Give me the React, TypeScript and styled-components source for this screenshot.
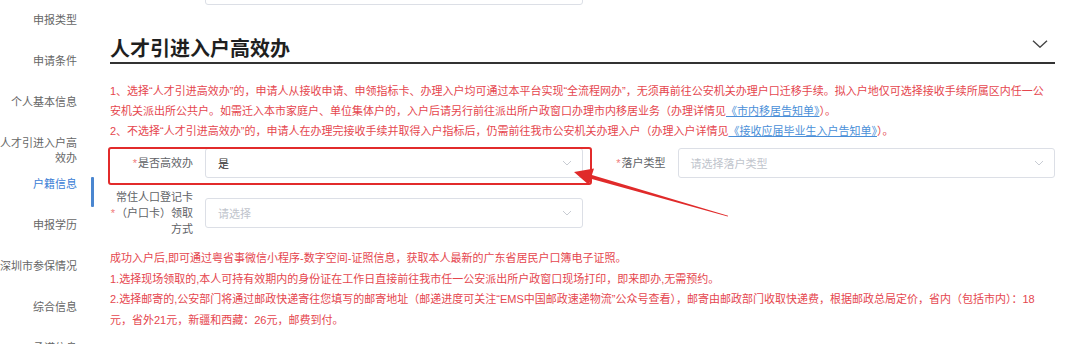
import React from "react";
import styled, { createGlobalStyle, css } from "styled-components";

const GlobalStyle = createGlobalStyle`
  html, body { margin: 0; padding: 0; background: #fff; }
  body {
    font-family: "Liberation Sans", "Noto Sans CJK SC", sans-serif;
    width: 1080px;
    height: 344px;
    overflow: hidden;
  }
`;

const Page = styled.div`
  position: relative;
  display: flex;
  width: 1080px;
  height: 344px;
  overflow: hidden;
  background: #fff;
`;

const Sidebar = styled.nav`
  flex: 0 0 95px;
  display: flex;
  flex-direction: column;
`;

const NavItem = styled.div<{ $active?: boolean }>`
  position: relative;
  flex: 0 0 41px;
  height: 41px;
  box-sizing: border-box;
  padding: 13px 18px 0 0;
  font-size: 11px;
  line-height: 15px;
  text-align: right;
  color: ${(p) => (p.$active ? "#3b80d6" : "#666")};
  ${(p) =>
    p.$active &&
    css`
      &::after {
        content: "";
        position: absolute;
        right: 1px;
        top: 13px;
        width: 3px;
        height: 30px;
        border-radius: 1px;
        background: #4a86d0;
      }
    `}
`;

const Main = styled.main`
  flex: 1;
  margin-left: 15px;
  padding-right: 25px;
  display: flex;
  flex-direction: column;
  min-width: 0;
`;

const FormGrid = styled.div<{ $top: number; $gap?: number }>`
  display: grid;
  grid-template-columns: 1fr 1fr;
  row-gap: ${(p) => p.$gap ?? 11}px;
  margin-top: ${(p) => p.$top}px;
`;

const FormItem = styled.div`
  position: relative;
  display: flex;
  align-items: center;
`;

const Label = styled.div`
  flex: 0 0 95px;
  box-sizing: border-box;
  padding-right: 12px;
  display: flex;
  justify-content: flex-end;
  align-items: center;
  font-size: 11px;
  line-height: 16px;
  color: #606266;
`;

const Star = styled.span`
  color: #f07a7a;
  margin-right: 1px;
  font-size: 11px;
`;

const LabelText = styled.span`
  max-width: 77px;
  text-align: right;
`;

const Select = styled.div<{ $placeholder?: boolean }>`
  flex: 1;
  height: 30px;
  box-sizing: border-box;
  border: 1px solid #dcdfe6;
  border-radius: 3px;
  display: flex;
  align-items: center;
  padding: 0 10px 0 12px;
  font-size: 11px;
  color: ${(p) => (p.$placeholder ? "#c0c4cc" : "#333")};
  background: #fff;
`;

const SelectArrow = styled.svg`
  margin-left: auto;
  flex: 0 0 auto;
`;

const Highlight = styled.div`
  position: absolute;
  left: -2px;
  top: -1px;
  right: -9px;
  bottom: -7px;
  border: 2.5px solid #e22b2b;
  border-radius: 3px;
  pointer-events: none;
`;

const SectionHeader = styled.div`
  display: flex;
  align-items: center;
  justify-content: space-between;
  padding-top: 29px;
  border-bottom: 2px solid #333;
`;

const Title = styled.h2`
  margin: 0;
  font-family: "Noto Sans CJK SC", sans-serif;
  font-size: 20px;
  line-height: 28px;
  font-weight: 700;
  color: #1f1f1f;
`;

const Collapse = styled.svg`
  margin: 0 7px 8px 0;
`;

const Notice = styled.div<{ $top: number; $lh: number }>`
  margin-top: ${(p) => p.$top}px;
  font-size: 11px;
  line-height: ${(p) => p.$lh}px;
  color: #e5464e;
`;

const Line = styled.div`
  white-space: nowrap;
`;

const DocLink = styled.a`
  color: #4a8fd8;
  text-decoration: underline;
`;

const Overlay = styled.svg`
  position: absolute;
  left: 0;
  top: 0;
  pointer-events: none;
`;

const Chevron = () => (
  <SelectArrow width="10" height="6" viewBox="0 0 10 6">
    <path d="M1 1l4 4 4-4" fill="none" stroke="#c8ccd3" strokeWidth="1" />
  </SelectArrow>
);

const navItems = [
  "申报类型",
  "申请条件",
  "个人基本信息",
  "人才引进入户高效办",
  "户籍信息",
  "申报学历",
  "深圳市参保情况",
  "综合信息",
  "承诺信息",
];

export default function App() {
  return (
    <Page>
      <GlobalStyle />
      <Sidebar>
        {navItems.map((t) => (
          <NavItem key={t} $active={t === "户籍信息"}>
            {t}
          </NavItem>
        ))}
      </Sidebar>
      <Main>
        <FormGrid $top={-25}>
          <FormItem>
            <Label />
            <Select $placeholder>
              <Chevron />
            </Select>
          </FormItem>
        </FormGrid>

        <SectionHeader>
          <Title>人才引进入户高效办</Title>
          <Collapse width="16" height="8" viewBox="0 0 16 8">
            <path d="M1 0.8l7 6.4 7-6.4" fill="none" stroke="#444" strokeWidth="1.4" />
          </Collapse>
        </SectionHeader>

        <Notice $top={17} $lh={20}>
          <Line>
            1、选择“人才引进高效办”的，申请人从接收申请、申领指标卡、办理入户均可通过本平台实现“全流程网办”，无须再前往公安机关办理户口迁移手续。拟入户地仅可选择接收手续所属区内任一公
          </Line>
          <Line>
            安机关派出所公共户。如需迁入本市家庭户、单位集体户的，入户后请另行前往派出所户政窗口办理市内移居业务（办理详情见
            <DocLink>《市内移居告知单》</DocLink>）。
          </Line>
          <Line>
            2、不选择“人才引进高效办”的，申请人在办理完接收手续并取得入户指标后，仍需前往我市公安机关办理入户（办理入户详情见
            <DocLink>《接收应届毕业生入户告知单》</DocLink>）。
          </Line>
        </Notice>

        <FormGrid $top={7}>
          <FormItem>
            <Label>
              <Star>*</Star>
              <LabelText>是否高效办</LabelText>
            </Label>
            <Select>
              是
              <Chevron />
            </Select>
            <Highlight />
          </FormItem>
          <FormItem>
            <Label>
              <Star>*</Star>
              <LabelText>落户类型</LabelText>
            </Label>
            <Select $placeholder>
              请选择落户类型
              <Chevron />
            </Select>
          </FormItem>
          <FormItem>
            <Label>
              <Star>*</Star>
              <LabelText>常住人口登记卡（户口卡）领取方式</LabelText>
            </Label>
            <Select $placeholder>
              请选择
              <Chevron />
            </Select>
          </FormItem>
        </FormGrid>

        <Notice $top={11} $lh={20.5}>
          <Line>
            成功入户后,即可通过粤省事微信小程序-数字空间-证照信息，获取本人最新的广东省居民户口簿电子证照。
          </Line>
          <Line>
            1.选择现场领取的,本人可持有效期内的身份证在工作日直接前往我市任一公安派出所户政窗口现场打印，即来即办,无需预约。
          </Line>
          <Line>
            2.选择邮寄的,公安部门将通过邮政快递寄往您填写的邮寄地址（邮递进度可关注“EMS中国邮政速递物流”公众号查看），邮寄由邮政部门收取快递费，根据邮政总局定价，省内（包括市内）：18
          </Line>
          <Line>元，省外21元，新疆和西藏：26元，邮费到付。</Line>
        </Notice>
      </Main>

      <Overlay width="1080" height="344" viewBox="0 0 1080 344">
        <polygon
          points="574,172 594,168.5 591.9,174.9 728.1,215.7 727.8,216.5 590.9,178.7 589,185"
          fill="#e02a2a"
        />
      </Overlay>
    </Page>
  );
}
